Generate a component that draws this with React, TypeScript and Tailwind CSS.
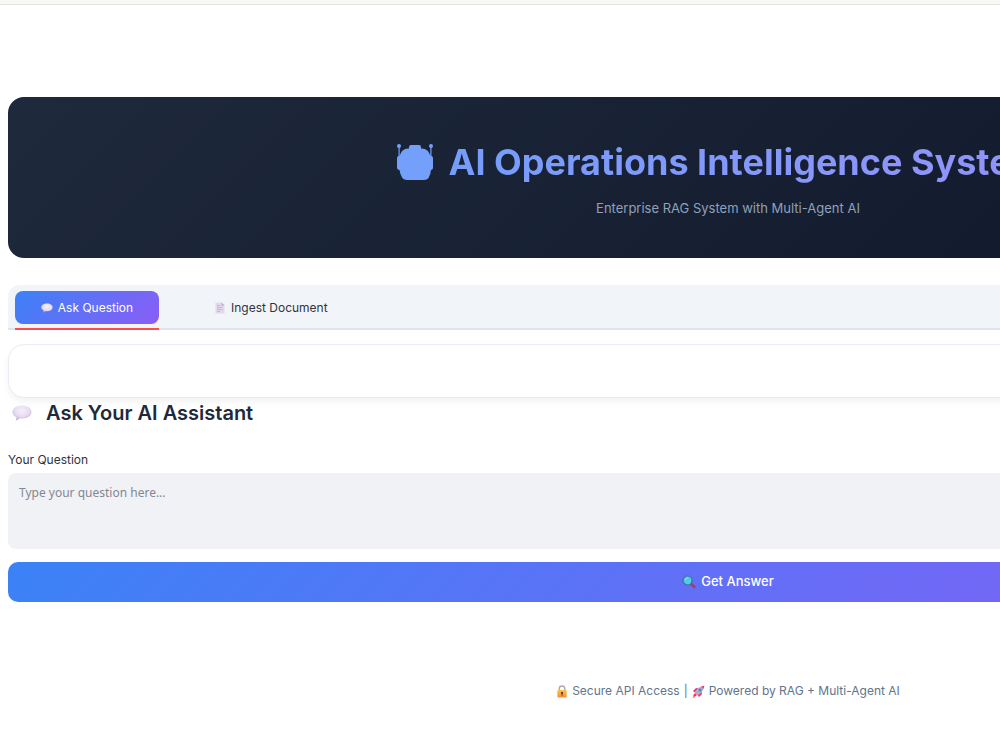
import { useState } from "react";

function RobotIcon() {
  return (
    <svg viewBox="0 0 36 36" className="h-9 w-9 shrink-0" fill="#749ffa" aria-hidden="true">
      <circle cx="2" cy="2" r="2" />
      <circle cx="34" cy="2" r="2" />
      <path d="M1.5 2h1.2v12H1.5zM33.3 2h1.2v12h-1.2z" />
      <path d="M12 3q0-2 2-2h8q2 0 2 2v1.500h1q6 0 8 6.500l1 1q2 0 2 2v9q0 3-2 3-1 10-7 10H10q-6 0-7.500-10-2.500 0-2.500-3V14q0-2 2-2l1-1q2-6.500 8-6.500h1z" />
    </svg>
  );
}

function ChatIcon({ id, className }: { id: string; className: string }) {
  return (
    <svg viewBox="0 0 20 16" className={className} aria-hidden="true">
      <defs>
        <radialGradient id={id} cx="0.5" cy="0.35" r="0.65">
          <stop offset="0" stopColor="#f5effa" />
          <stop offset="0.6" stopColor="#e8dcf0" />
          <stop offset="1" stopColor="#bfa9d0" />
        </radialGradient>
      </defs>
      <path
        d="M10 0.5c5.3 0 9.5 2.8 9.5 6.5s-4.200 6.500-9.500 6.500c-.9 0-1.800-.1-2.600-.3C6.300 14.600 5 15.400 3.600 15.400c.7-.9 1-2 .8-3.200C2 11 .5 9.200.5 7 .5 3.300 4.700.5 10 .5z"
        fill={`url(#${id})`}
      />
    </svg>
  );
}

function PageIcon() {
  return (
    <svg viewBox="0 0 10 12" className="h-3 w-[10px]" aria-hidden="true">
      <path d="M.5.5h6L9.500 3.500v8h-9z" fill="#e5d8ed" />
      <path d="M6.500.5v3h3z" fill="#b7a5c4" />
      <path d="M2 3.500h3M2 5.500h5.500M2 7.500h5.500M2 9.500h3" stroke="#b9a8c6" strokeWidth="0.7" />
    </svg>
  );
}

function SearchIcon() {
  return (
    <svg viewBox="0 0 14 14" className="h-[14px] w-[14px]" aria-hidden="true">
      <path d="M8.500 8.500l4 3.500" stroke="#98435f" strokeWidth="2.400" strokeLinecap="round" />
      <circle cx="5.500" cy="5.500" r="4.500" fill="#50cbe6" stroke="#486c9c" strokeWidth="1.200" />
      <path d="M3.500 5a2.500 2.500 0 0 1 2-2" stroke="#8be6f5" fill="none" />
    </svg>
  );
}

function LockIcon() {
  return (
    <svg viewBox="0 0 12 14" className="h-[13px] w-3" aria-hidden="true">
      <defs>
        <linearGradient id="lock" x1="0" y1="0" x2="0" y2="1">
          <stop offset="0" stopColor="#ffc33f" />
          <stop offset="1" stopColor="#f58a42" />
        </linearGradient>
      </defs>
      <path d="M3 6V4a3 3 0 0 1 6 0v2" fill="none" stroke="#b5a5b5" strokeWidth="1.500" />
      <rect x="1" y="5.500" width="10" height="8" rx="1.200" fill="url(#lock)" />
      <circle cx="6" cy="8.500" r="1.200" fill="#5b3a3c" />
      <path d="M5.500 8.500h1v3h-1z" fill="#5b3a3c" />
    </svg>
  );
}

function RocketIcon() {
  return (
    <svg viewBox="0 0 13 13" className="h-[13px] w-[13px]" aria-hidden="true">
      <path d="M1 6l3-3 3 .5-4 4zM7 12l3-3-.5-3-4 4z" fill="#f4316f" />
      <path d="M3 8C3 5 7 1.500 12.300.7 11.500 6 8 10 5 10z" fill="#b4a9cf" />
      <path d="M9.300 1.600l3-.9-.9 3z" fill="#f4316f" />
      <circle cx="8" cy="5" r="1.500" fill="#3a8fd0" />
      <path d="M3 8l2 2-2 1.500L1.500 13 .8 12.200 1.500 10z" fill="#f52f67" />
      <path d="M1.500 10.500l1.200 1.200L.5 12.700z" fill="#ffb02e" />
    </svg>
  );
}

export default function App() {
  const [tab, setTab] = useState("ask");
  const [question, setQuestion] = useState("");

  return (
    <div className="min-h-screen overflow-x-hidden bg-white font-['Inter',sans-serif]">
      {/* Top strip */}
      <div className="h-[5px] border-b border-[#e2e6dc] bg-[#f7faf2]" />

      <main className="min-w-[1456px] px-2 pt-[92px]">
        {/* Header */}
        <header className="rounded-2xl bg-[linear-gradient(135deg,#1e293b_0%,#0f172a_100%)] px-8 pt-[41px] pb-10 text-center">
          <h1 className="flex items-center justify-center gap-4 bg-[linear-gradient(135deg,#60a5fa,#a78bfa)] bg-clip-text pr-4 text-4xl leading-12 font-bold text-transparent">
            <RobotIcon />
            AI Operations Intelligence System
          </h1>
          <p className="mt-3 text-[13px] leading-5 text-slate-400">
            Enterprise RAG System with Multi-Agent AI
          </p>
        </header>

        {/* Tabs */}
        <div
          role="tablist"
          className="mt-[27px] flex gap-7 rounded-t-xl border-b-2 border-[#dfe3ea] bg-slate-100 px-[7px] pt-[6px] text-xs"
        >
          <div className={tab === "ask" ? "-mb-[2px] border-b-2 border-[#ff4b4b] pb-1" : "pb-1"}>
            <button
              role="tab"
              aria-selected={tab === "ask"}
              onClick={() => setTab("ask")}
              className="flex h-[33px] w-36 items-center justify-center gap-[5px] rounded-lg bg-[linear-gradient(135deg,#3b82f6,#8b5cf6)] text-white"
            >
              <ChatIcon id="chat-tab" className="h-[10px] w-3" />
              Ask Question
            </button>
          </div>
          <button
            role="tab"
            aria-selected={tab === "ingest"}
            onClick={() => setTab("ingest")}
            className="flex h-[33px] items-center gap-[6px] px-7 text-[#31333f]"
          >
            <PageIcon />
            Ingest Document
          </button>
        </div>

        {/* Card */}
        <div className="mt-[14px] h-[54px] rounded-2xl border border-[#e8edf3] bg-white shadow-[0_4px_6px_rgba(0,0,0,0.05)]" />

        <h2 className="flex items-center gap-[14px] pl-1 text-xl leading-[30px] font-semibold text-slate-800">
          <ChatIcon id="chat-heading" className="h-4 w-5" />
          Ask Your AI Assistant
        </h2>

        <form onSubmit={(e) => e.preventDefault()} className="mt-[22px]">
          <label htmlFor="question" className="block text-xs leading-5 text-[#31333f]">
            Your Question
          </label>
          <textarea
            id="question"
            value={question}
            onChange={(e) => setQuestion(e.target.value)}
            placeholder="Type your question here..."
            className="mt-[3px] block h-[76px] w-full resize-none rounded-lg bg-[#f0f2f6] px-[11px] py-[10px] font-['Noto_Sans',sans-serif] text-xs leading-5 text-[#31333f] outline-none placeholder:text-[#858791]"
          />
          <button
            type="submit"
            className="mt-[13px] flex h-10 w-full items-center justify-center gap-[5px] rounded-[10px] bg-[linear-gradient(135deg,#3b82f6,#8b5cf6)] text-[13px] font-medium text-white"
          >
            <SearchIcon />
            Get Answer
          </button>
        </form>

        <footer className="mt-[79px] flex items-center justify-center gap-1 pb-12 text-xs leading-5 text-slate-500">
          <LockIcon />
          <span>Secure API Access</span>
          <span>|</span>
          <RocketIcon />
          <span>Powered by RAG + Multi-Agent AI</span>
        </footer>
      </main>
    </div>
  );
}
